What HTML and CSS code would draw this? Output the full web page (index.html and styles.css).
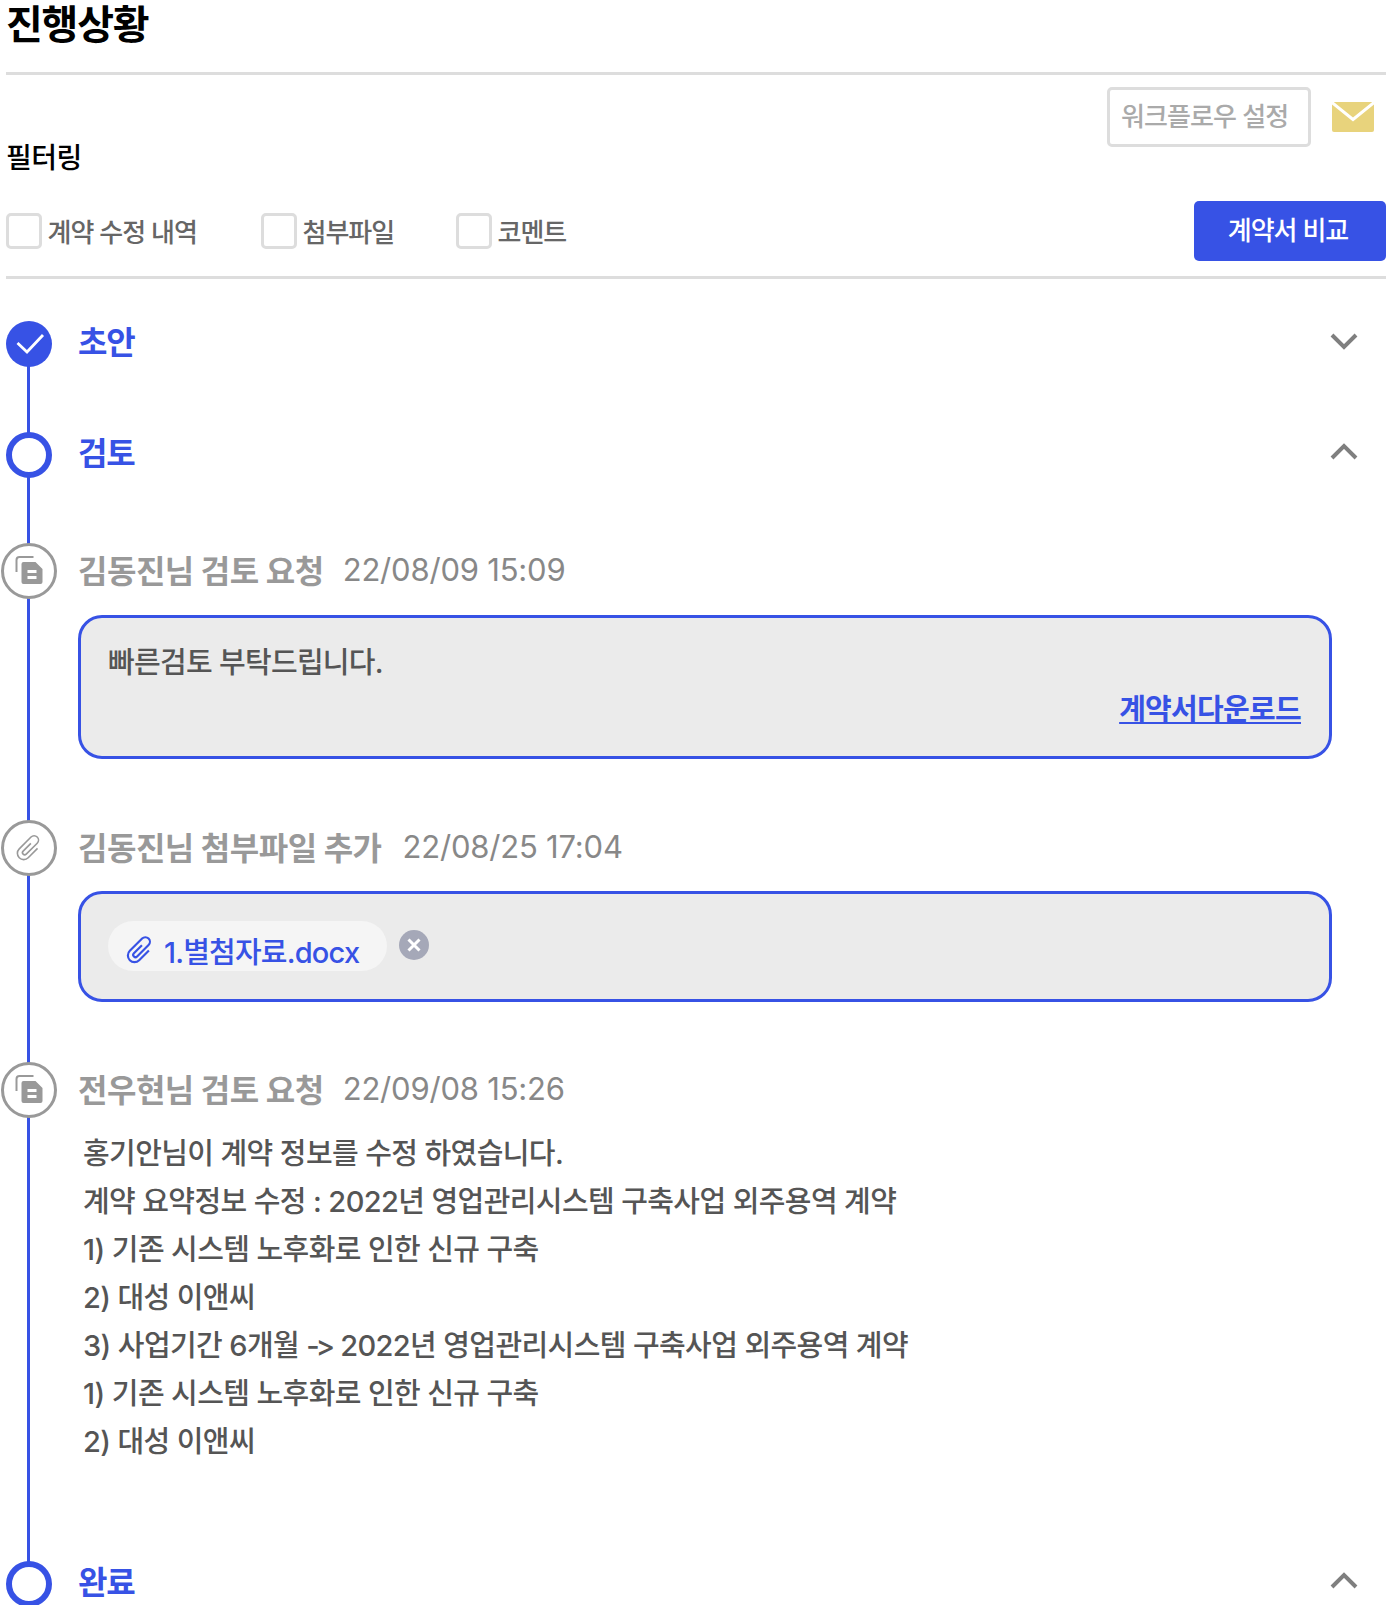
FILE: index.html
```html
<!DOCTYPE html>
<html lang="ko">
<head>
<meta charset="utf-8">
<title>진행상황</title>
<link rel="stylesheet" href="styles.css">
</head>
<body>
<main class="page">
  <h1 class="title">진행상황</h1>
  <section class="filter">
    <div class="filter-top">
      <h2 class="filter-label">필터링</h2>
      <div class="workflow">
        <div class="workflow-input">워크플로우 설정</div>
        <svg class="mail" viewBox="0 0 42 30"><rect width="42" height="30" rx="2" fill="#e8d37c"/><path d="M0 0.500 21 17.500 42 0.500" fill="none" stroke="#fff" stroke-width="3"/></svg>
      </div>
    </div>
    <div class="filter-row">
      <label class="check check-a"><span class="box"></span><span class="check-text">계약 수정 내역</span></label>
      <label class="check check-b"><span class="box"></span><span class="check-text">첨부파일</span></label>
      <label class="check"><span class="box"></span><span class="check-text">코멘트</span></label>
      <button class="compare">계약서 비교</button>
    </div>
  </section>

  <section class="timeline">
    <div class="stage">
      <span class="node node-done"><svg viewBox="0 0 46 46" width="46" height="46"><path d="M11.500 22 21 31 37 14" fill="none" stroke="#fff" stroke-width="2.800"/></svg></span>
      <span class="stage-name">초안</span>
      <svg class="chev" viewBox="0 0 28 20"><path d="M2 4 14 16 26 4" fill="none" stroke="#7f7f7f" stroke-width="4"/></svg>
    </div>
    <div class="stage">
      <span class="node"></span>
      <span class="stage-name">검토</span>
      <svg class="chev" viewBox="0 0 28 20"><path d="M2 16 14 4 26 16" fill="none" stroke="#7f7f7f" stroke-width="4"/></svg>
    </div>

    <article class="event event-one">
      <div class="event-head">
        <span class="event-icon"><svg viewBox="0 0 32 32" width="32" height="32"><path d="M3.500 17V5a3 3 0 0 1 3-3h14" fill="none" stroke="#999" stroke-width="2"/><path fill="#999" fill-rule="evenodd" d="M8.500 9a2 2 0 0 1 2-2h12l7 7v13a2 2 0 0 1-2 2h-17a2 2 0 0 1-2-2ZM14.500 15v3h9v-3ZM14.500 21v3h9v-3Z"/></svg></span>
        <span class="event-who">김동진님 검토 요청</span>
        <span class="event-date">22/08/09 15:09</span>
      </div>
      <div class="panel panel-msg">
        <p class="panel-text">빠른검토 부탁드립니다.</p>
        <a class="download" href="#">계약서다운로드</a>
      </div>
    </article>

    <article class="event event-two">
      <div class="event-head">
        <span class="event-icon"><svg class="clip" viewBox="-16 -16 32 32" width="32" height="32"><path transform="rotate(45) scale(1.150)" d="M5.500 -5V6.500a5.500 5.500 0 0 1-11 0V-8a3.800 3.800 0 0 1 7.600 0V5.500a1.900 1.900 0 0 1-3.800 0V-4" fill="none" stroke="#999" stroke-width="1.400"/></svg></span>
        <span class="event-who">김동진님 첨부파일 추가</span>
        <span class="event-date event-date-wide">22/08/25 17:04</span>
      </div>
      <div class="panel panel-file">
        <span class="chip"><svg class="clip" viewBox="-14 -14 28 28" width="28" height="28"><path transform="rotate(45) scale(1.200)" d="M5.500 -5V6.500a5.500 5.500 0 0 1-11 0V-8a3.800 3.800 0 0 1 7.600 0V5.500a1.900 1.900 0 0 1-3.800 0V-4" fill="none" stroke="#3752e5" stroke-width="1.800"/></svg>1.별첨자료.docx</span>
        <svg class="remove" viewBox="0 0 30 30" width="30" height="30"><circle cx="15" cy="15" r="15" fill="#a5a8b8"/><path d="M9.500 9.500 20.500 20.500M20.500 9.500 9.500 20.500" stroke="#fff" stroke-width="3"/></svg>
      </div>
    </article>

    <article class="event event-three">
      <div class="event-head">
        <span class="event-icon"><svg viewBox="0 0 32 32" width="32" height="32"><path d="M3.500 17V5a3 3 0 0 1 3-3h14" fill="none" stroke="#999" stroke-width="2"/><path fill="#999" fill-rule="evenodd" d="M8.500 9a2 2 0 0 1 2-2h12l7 7v13a2 2 0 0 1-2 2h-17a2 2 0 0 1-2-2ZM14.500 15v3h9v-3ZM14.500 21v3h9v-3Z"/></svg></span>
        <span class="event-who">전우현님 검토 요청</span>
        <span class="event-date">22/09/08 15:26</span>
      </div>
      <div class="log">
        <p>홍기안님이 계약 정보를 수정 하였습니다.</p>
        <p>계약 요약정보 수정 : 2022년 영업관리시스템 구축사업 외주용역 계약</p>
        <p>1) 기존 시스템 노후화로 인한 신규 구축</p>
        <p>2) 대성 이앤씨</p>
        <p>3) 사업기간 6개월 <span class="arrow">-&gt;</span> 2022년 영업관리시스템 구축사업 외주용역 계약</p>
        <p>1) 기존 시스템 노후화로 인한 신규 구축</p>
        <p>2) 대성 이앤씨</p>
      </div>
    </article>

    <div class="stage stage-last">
      <span class="node"></span>
      <span class="stage-name">완료</span>
      <svg class="chev" viewBox="0 0 28 20"><path d="M2 16 14 4 26 16" fill="none" stroke="#7f7f7f" stroke-width="4"/></svg>
    </div>
  </section>
</main>
</body>
</html>
```
FILE: styles.css
```css
* { box-sizing: border-box; }
html, body { margin: 0; height: 1605px; overflow: hidden; background: #fff; }
body { font-family: Inter, "Noto Sans CJK KR", "Noto Sans", sans-serif; color: #000; font-variant-ligatures: none; font-feature-settings: "calt" 0; }
p, h1, h2 { margin: 0; }
.page { padding-left: 6px; }

.title { height: 75px; border-bottom: 3px solid #ddd; font-size: 40px; font-weight: 700; line-height: 50px; letter-spacing: -1.2px; }

.filter { height: 204px; border-bottom: 3px solid #ddd; }
.filter-top { height: 126px; display: flex; align-items: flex-start; justify-content: space-between; }
.filter-label { margin-top: 63px; font-size: 28px; font-weight: 500; line-height: 40px; letter-spacing: -0.5px; }
.workflow { display: flex; align-items: center; gap: 21px; margin-top: 12px; padding-right: 12px; }
.workflow-input { width: 204px; height: 60px; padding-left: 11px; border: 3px solid #ddd; border-radius: 5px; color: #aaa; font-size: 26px; font-weight: 500; line-height: 54px; letter-spacing: -0.9px; white-space: nowrap; }
.mail { width: 42px; height: 30px; }

.filter-row { display: flex; align-items: center; height: 60px; }
.check { display: flex; align-items: center; gap: 5.500px; color: #666; font-size: 26px; font-weight: 500; line-height: 36px; letter-spacing: -1px; }
.check-text { padding-top: 4px; }
.check-a { width: 255px; }
.check-b { width: 195px; }
.box { width: 36px; height: 36px; border: 3px solid #ddd; border-radius: 5px; background: #fff; }
.compare { margin-left: auto; width: 192px; height: 60px; padding: 0 4px 0 0; border: 0; border-radius: 5px; background: #3752e5; color: #fff; font: 500 26px/58px Inter, "Noto Sans CJK KR", sans-serif; letter-spacing: -1px; }

.timeline { position: relative; padding-top: 42px; }
.timeline::before { content: ""; position: absolute; left: 21px; top: 60px; bottom: 20px; width: 3px; background: #3752e5; }

.stage { position: relative; display: flex; align-items: center; height: 46px; }
.stage + .stage { margin-top: 65px; }
.stage.stage-last { margin-top: 95px; }
.node { width: 46px; height: 46px; border: 6px solid #3752e5; border-radius: 50%; background: #fff; flex: none; }
.node-done { border: 0; background: #3752e5; }
.node-done svg { display: block; }
.stage-name { margin-left: 26px; padding-bottom: 2px; color: #3752e5; font-size: 32px; font-weight: 700; line-height: 46px; letter-spacing: -1.3px; }
.chev { margin: 0 28px 6px auto; width: 28px; height: 20px; }

.event { position: relative; }
.event-one { margin-top: 65px; }
.event-two { margin-top: 61px; }
.event-three { margin-top: 60px; }
.event-head { display: flex; align-items: center; height: 56px; margin-left: -5px; }
.event-icon { display: flex; align-items: center; justify-content: center; width: 56px; height: 56px; flex: none; border: 3px solid #999; border-radius: 50%; background: #fff; }
.clip { overflow: visible; }
.event-who { margin-left: 21px; padding-bottom: 5px; color: #999; font-size: 32px; font-weight: 700; letter-spacing: -0.5px; white-space: nowrap; }
.event-date { margin-left: 19px; padding-bottom: 3px; color: #888; font-size: 31px; letter-spacing: -0.2px; white-space: nowrap; }
.event-date-wide { margin-left: 21px; }

.panel { margin: 16px 54px 0 72px; border: 3px solid #3752e5; border-radius: 24px; background: #ebebeb; }
.panel-msg { height: 144px; padding: 24px 28px 0 27px; }
.panel-text { color: #555; font-size: 29px; font-weight: 500; line-height: 42px; letter-spacing: -0.7px; }
.download { display: block; margin-top: 5px; text-align: right; color: #3752e5; font-size: 29px; font-weight: 700; line-height: 42px; letter-spacing: -0.7px; }
.panel-file { display: flex; align-items: flex-start; height: 111px; margin-top: 15px; padding: 27px 27px 0; }
.chip { display: flex; align-items: center; gap: 10px; width: 279px; height: 50px; padding: 8px 0 0 18px; border-radius: 25px; background: #f5f5f5; color: #3752e5; font-size: 29px; font-weight: 500; letter-spacing: -0.8px; white-space: nowrap; }
.remove { margin: 9px 0 0 12px; }

.log { margin: 12px 0 0 77px; color: #555; font-size: 29px; font-weight: 500; line-height: 48px; letter-spacing: -0.6px; }
.arrow { letter-spacing: -4px; margin-right: 2px; }
```
